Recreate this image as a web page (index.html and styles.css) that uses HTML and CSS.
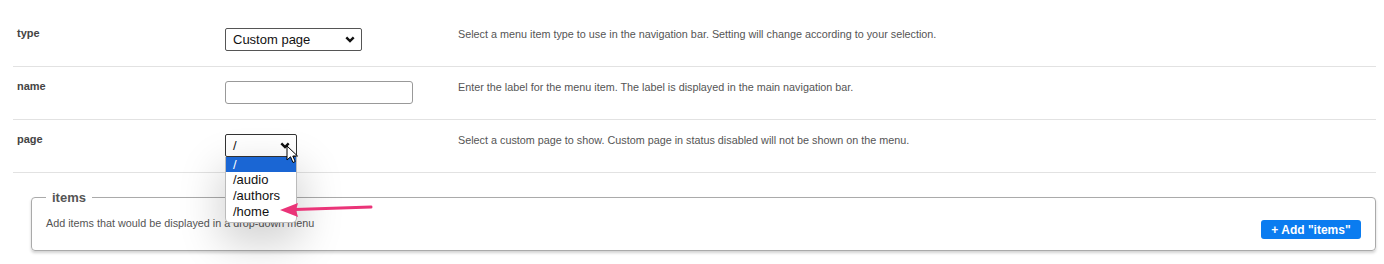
FILE: index.html
```html
<!DOCTYPE html>
<html lang="en">

<head>
  <meta charset="UTF-8" />
  <title>Menu item settings</title>
  <link rel="stylesheet" href="styles.css">
</head>

<body>
  <div class="settings">
    <div class="row">
      <div class="label">type</div>
      <div class="control">
        <div class="select select-type">
          <span>Custom page</span>
          <svg class="chevron" width="10" height="7" viewBox="0 0 10 7"><path d="M1.3 1.3 L5 5 L8.7 1.3" fill="none" stroke="#111" stroke-width="2.4"/></svg>
        </div>
      </div>
      <div class="desc">Select a menu item type to use in the navigation bar. Setting will change according to your selection.</div>
    </div>

    <div class="row">
      <div class="label">name</div>
      <div class="control">
        <div class="text-input"></div>
      </div>
      <div class="desc">Enter the label for the menu item. The label is displayed in the main navigation bar.</div>
    </div>

    <div class="row">
      <div class="label">page</div>
      <div class="control">
        <div class="page-wrap">
          <div class="select select-page">
            <span>/</span>
            <svg class="chevron" width="10" height="7" viewBox="0 0 10 7"><path d="M1.3 1.3 L5 5 L8.7 1.3" fill="none" stroke="#111" stroke-width="2.4"/></svg>
          </div>
          <ul class="dropdown">
            <li class="selected">/</li>
            <li>/audio</li>
            <li>/authors</li>
            <li>/home</li>
          </ul>
          <svg class="cursor" width="14" height="20" viewBox="0 0 14 20">
            <path d="M1 1 L1 15 L4.5 11.8 L7 17.5 L9.2 16.5 L6.8 11 L11.5 11 Z" fill="#fff" stroke="#000" stroke-width="1" stroke-linejoin="round"/>
          </svg>
        </div>
      </div>
      <div class="desc">Select a custom page to show. Custom page in status disabled will not be shown on the menu.</div>
    </div>

    <fieldset class="items">
      <legend>items</legend>
      <div class="items-body">
        <p class="items-help">Add items that would be displayed in a drop-down menu</p>
        <button class="add-btn">+ Add "items"</button>
      </div>
    </fieldset>
  </div>

  <svg class="pointer-arrow" width="100" height="20" viewBox="0 0 100 20">
    <path d="M94 8 L18 10.5" stroke="#ea3478" stroke-width="3" stroke-linecap="round"/>
    <path d="M3 11 L21 4 L19 11 L21 18 Z" fill="#ea3478"/>
  </svg>
</body>

</html>
```

FILE: styles.css
```css
* {
  margin: 0;
  padding: 0;
  box-sizing: border-box;
}

body {
  font-family: "Liberation Sans", Arial, sans-serif;
  color: #444;
  background: #fff;
  width: 1384px;
  height: 264px;
  overflow: hidden;
  position: relative;
}

.settings {
  padding: 14px 8px 0 13px;
}

/* Rows */
.row {
  display: grid;
  grid-template-columns: 208px 233px 1fr;
  padding: 14px 0 15px 4px;
  border-bottom: 1px solid #e2e2e2;
  height: 53px;
}

.label {
  font-size: 11px;
  font-weight: bold;
  line-height: 13px;
  color: #444;
  margin-top: -1px;
}

.desc {
  font-size: 10.8px;
  line-height: 13px;
  color: #555;
}

.select {
  display: flex;
  align-items: center;
  justify-content: space-between;
  height: 23px;
  border: 1px solid #555;
  border-radius: 2px;
  padding: 0 6px 0 7px;
  font-size: 13px;
  color: #111;
  background: #fff;
}

.select-type {
  width: 137px;
}

.select-page {
  width: 72px;
  border-color: #333;
}

.text-input {
  width: 188px;
  height: 23px;
  border: 1px solid #999;
  border-radius: 3px;
}

/* Open drop-down */
.page-wrap {
  position: relative;
  width: 72px;
}

.dropdown {
  position: absolute;
  top: 23px;
  left: 0;
  width: 72px;
  list-style: none;
  background: #fff;
  border: 1px solid #bbb;
  border-top: none;
  border-radius: 0 0 5px 5px;
  box-shadow: 0 16px 40px 6px rgba(0, 0, 0, 0.17);
  font-size: 13px;
  line-height: 16px;
  color: #111;
  padding-bottom: 2px;
  z-index: 5;
}

.dropdown li {
  padding-left: 7px;
}

.dropdown li.selected {
  background: #1a66d4;
  color: #fff;
  height: 15px;
  line-height: 15px;
}

.cursor {
  position: absolute;
  left: 61px;
  top: 11px;
  z-index: 6;
}

/* Items fieldset */
.items {
  margin: 17px 0 0 18px;
  border: 1px solid #aaa;
  border-radius: 4px;
  box-shadow: 0 2px 3px rgba(0, 0, 0, 0.18);
  padding: 0 14px 11px 14px;
}

.items legend {
  font-size: 13px;
  font-weight: bold;
  line-height: 15px;
  color: #555;
  padding: 0 6px;
}

.items-body {
  display: flex;
  justify-content: space-between;
  align-items: flex-end;
}

.items-help {
  align-self: flex-start;
  font-size: 10.8px;
  line-height: 13px;
  color: #555;
  margin-top: 12px;
}

.add-btn {
  background: #0a7cf0;
  color: #fff;
  border: none;
  border-radius: 3px;
  font-family: "Liberation Sans", Arial, sans-serif;
  font-size: 12px;
  font-weight: bold;
  height: 19px;
  width: 100px;
  margin-top: 15px;
}

.pointer-arrow {
  position: absolute;
  left: 277px;
  top: 199px;
  z-index: 7;
}
```
